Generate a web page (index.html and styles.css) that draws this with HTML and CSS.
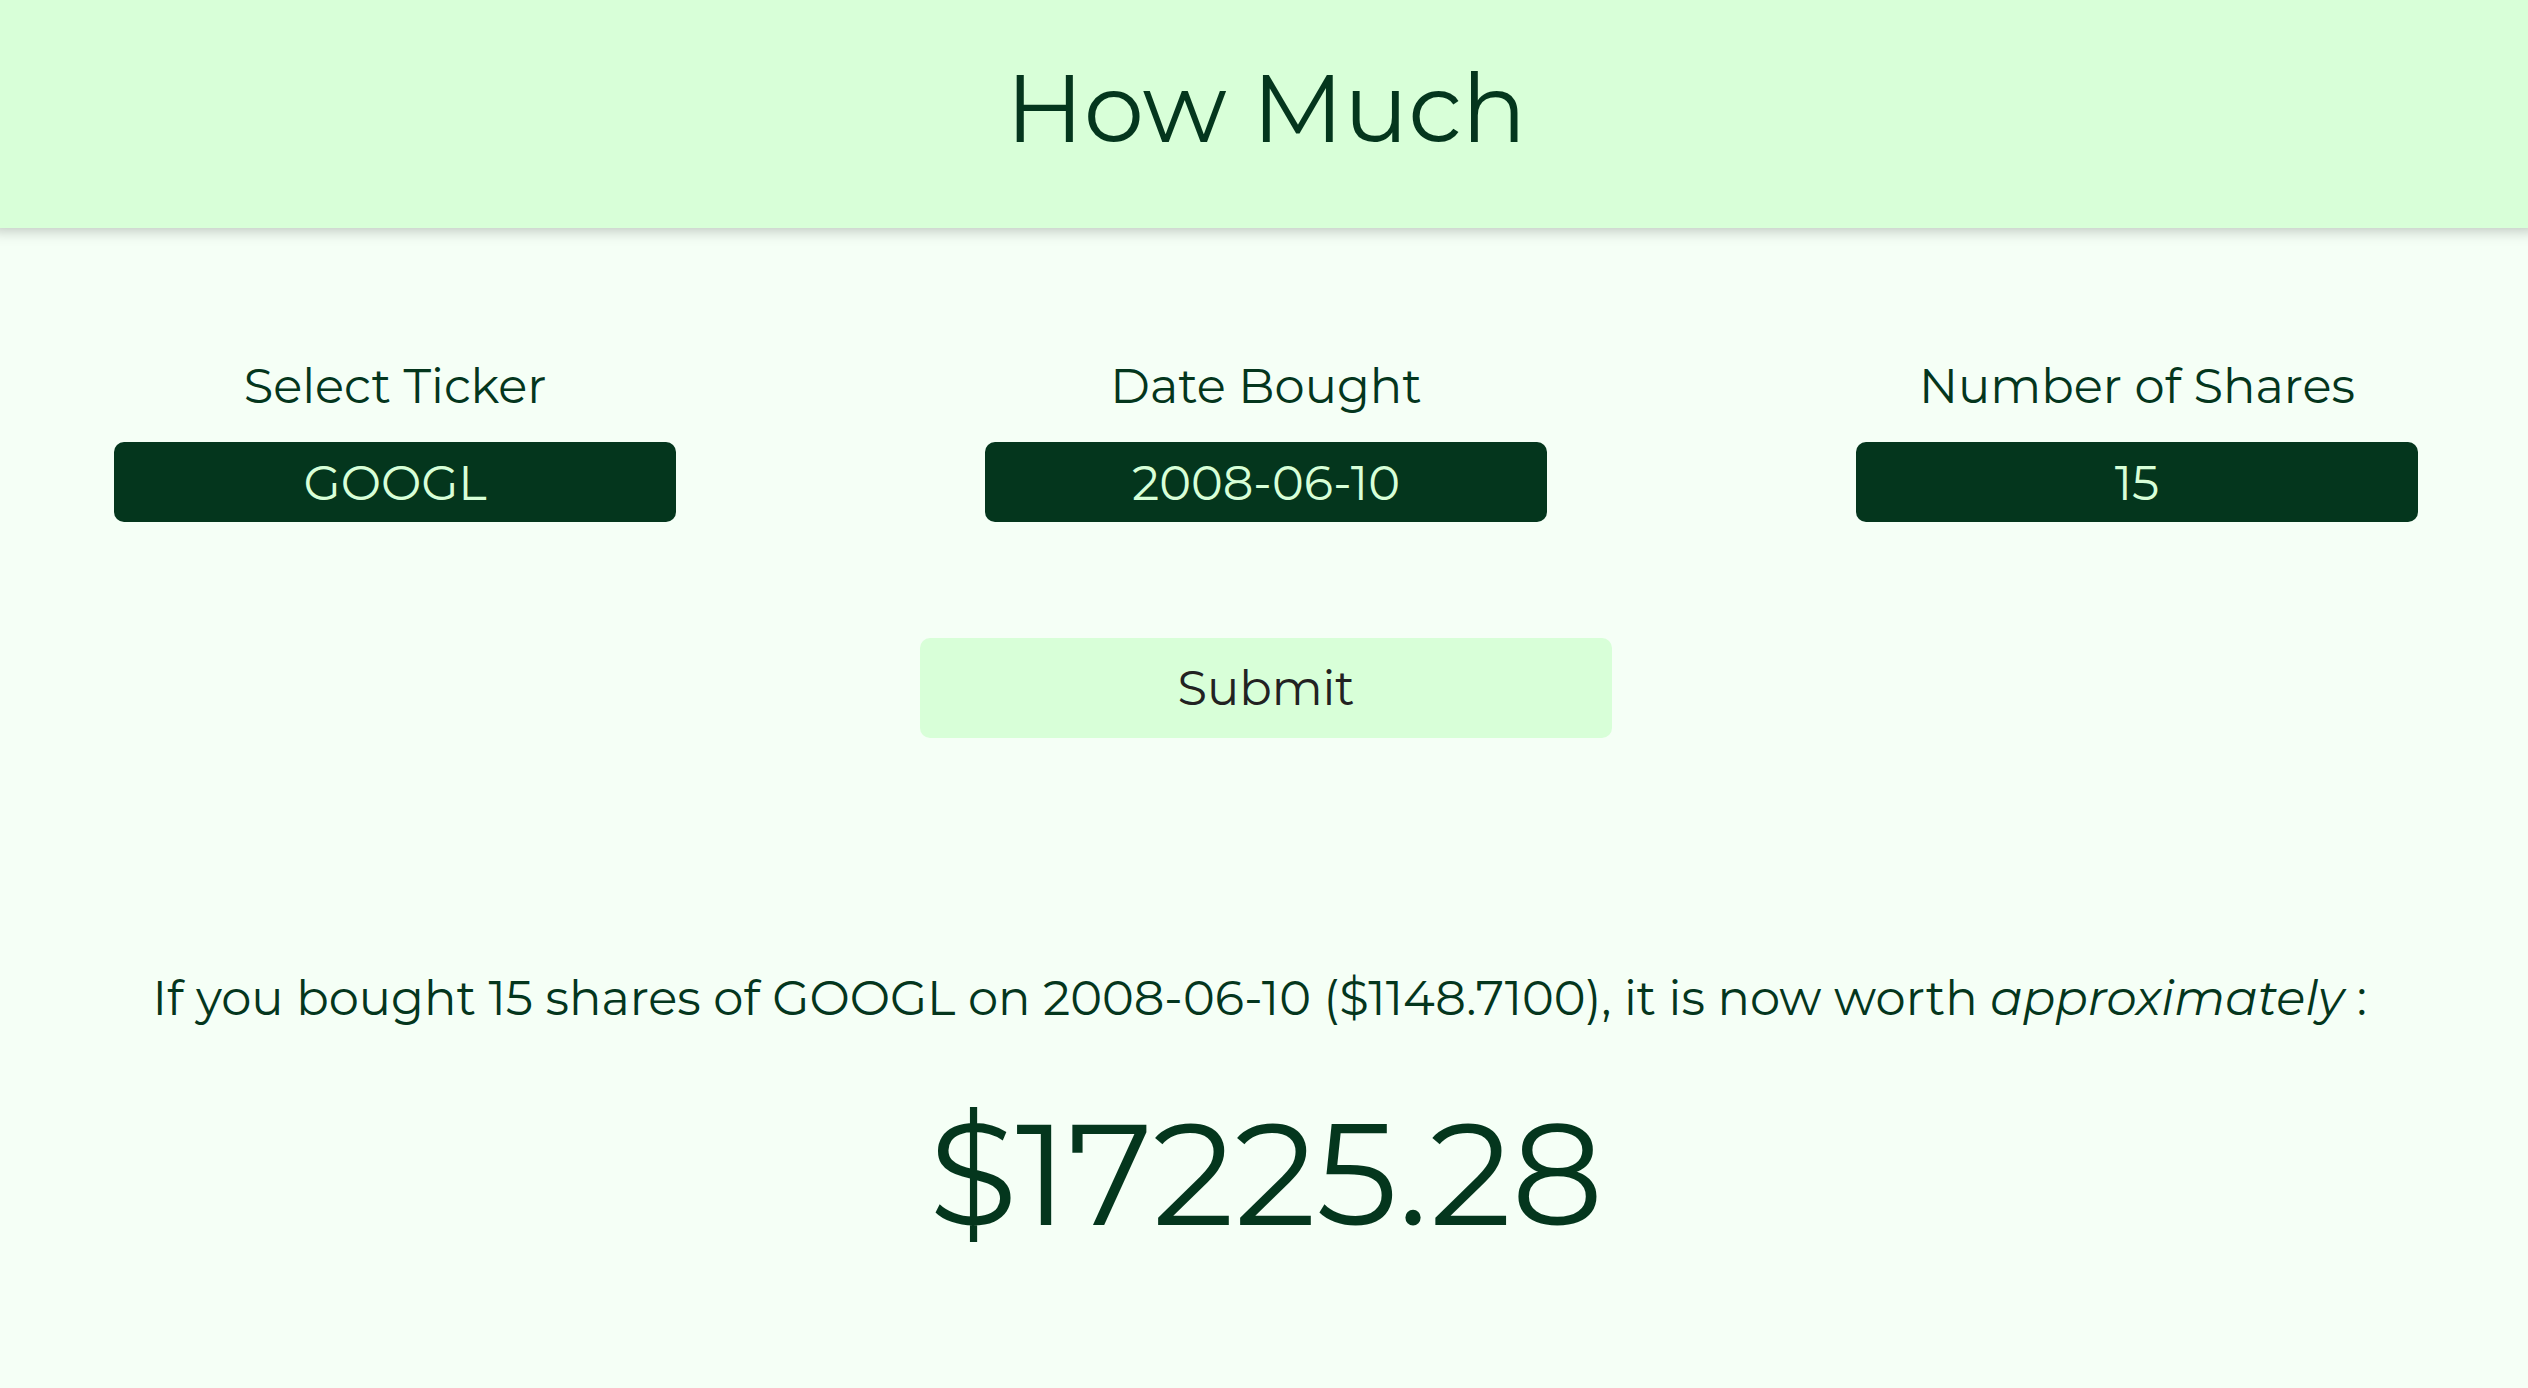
FILE: index.html
```html
<!DOCTYPE html>
<html lang="en">
<head>
<meta charset="utf-8">
<title>How Much</title>
<link rel="stylesheet" href="styles.css">
</head>
<body>
<header class="header"><h1 class="title">How Much</h1></header>
<main class="main">
<form class="form">
<div class="fields">
<div class="field"><label for="ticker">Select Ticker</label>
<select class="control" id="ticker"><option>GOOGL</option></select></div>
<div class="field"><label for="date">Date Bought</label>
<input class="control" id="date" type="text" value="2008-06-10"></div>
<div class="field"><label for="shares">Number of Shares</label>
<input class="control" id="shares" type="text" inputmode="numeric" value="15"></div>
</div>
<button class="submit" type="submit">Submit</button>
</form>
<section class="result">
<p class="summary">If you bought 15 shares of GOOGL on 2008-06-10 ($1148.7100), it is now worth <em>approximately</em> :&nbsp;</p>
<p class="amount">$17225.28</p>
</section>
</main>
</body>
</html>
```

FILE: styles.css
```css
* {
  box-sizing: border-box;
}

body {
  margin: 0;
  min-height: 100vh;
  background: #f5fff6;
  color: #04361d;
  font-family: Montserrat, Inter, sans-serif;
  font-size: 48px;
  line-height: 60px;
}

.header {
  padding: 48px 0 60px 4px;
  background: #d8ffd8;
  box-shadow: 0 -8px 14px 10px rgba(0, 0, 0, 0.25);
  text-align: center;
}

.title {
  margin: 0;
  font-size: 96px;
  font-weight: 400;
  line-height: 120px;
}

.main {
  padding-left: 4px;
}

.form {
  display: flex;
  flex-direction: column;
  align-items: center;
  padding-top: 128px;
}

.fields {
  display: flex;
  justify-content: space-between;
  align-self: stretch;
  padding: 0 110px;
}

.field {
  display: flex;
  flex-direction: column;
  gap: 26px;
  width: 24.4%;
  text-align: center;
}

.control {
  width: 100%;
  height: 80px;
  padding: 2px 0 0;
  border: 0;
  border-radius: 10px;
  background: #04361d;
  color: #d8ffd8;
  font: inherit;
  text-align: center;
  text-align-last: center;
  appearance: none;
}

.submit {
  width: 27.4%;
  height: 100px;
  margin-top: 116px;
  border: 0;
  border-radius: 10px;
  background: #d8ffd8;
  color: #222;
  font: inherit;
}

.result {
  padding-top: 230px;
  text-align: center;
}

.summary,
.amount {
  margin: 0;
}

.amount {
  padding-top: 58px;
  font-size: 144px;
  line-height: 176px;
}
```
